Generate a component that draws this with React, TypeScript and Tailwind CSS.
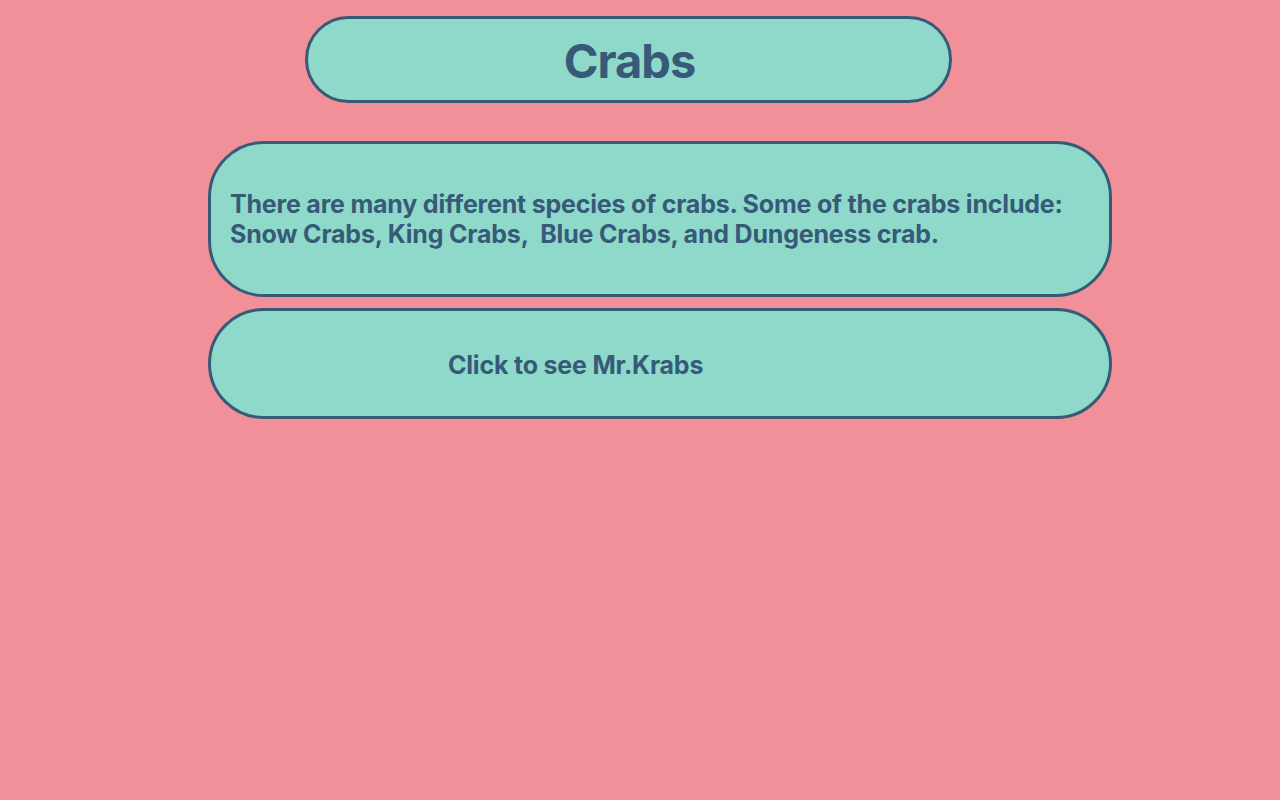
export default function App() {
  return (
    <div
      className="min-h-screen w-full bg-[#f2909a] pt-[16px]"
      style={{ fontFamily: 'Inter, "Noto Sans", sans-serif' }}
    >
      {/* Title */}
      <div className="ml-[305px] flex h-[87px] w-[647px] items-center justify-center rounded-full border-[3px] border-[#375a78] bg-[#8ed9ca]">
        <h1 className="pl-[2px] pt-[4px] text-[47px] font-bold tracking-[-1px] text-[#375a78]">
          Crabs
        </h1>
      </div>

      {/* Info */}
      <div className="ml-[208px] mt-[38px] flex h-[156px] w-[904px] items-center rounded-[56px] border-[3px] border-[#375a78] bg-[#8ed9ca] px-[19px]">
        <p className="text-[25px] font-bold leading-[30px] tracking-[-0.2px] text-[#375a78]">
          There are many different species of crabs. Some of the crabs include:
          <br />
          Snow Crabs, King Crabs,&nbsp; Blue Crabs, and Dungeness crab.
        </p>
      </div>

      {/* Button */}
      <button className="ml-[208px] mt-[11px] flex h-[111px] w-[904px] items-center rounded-[56px] border-[3px] border-[#375a78] bg-[#8ed9ca] pl-[237px]">
        <span className="pt-[5px] text-[25px] font-bold tracking-[-0.2px] text-[#375a78]">
          Click to see Mr.Krabs
        </span>
      </button>
    </div>
  );
}
